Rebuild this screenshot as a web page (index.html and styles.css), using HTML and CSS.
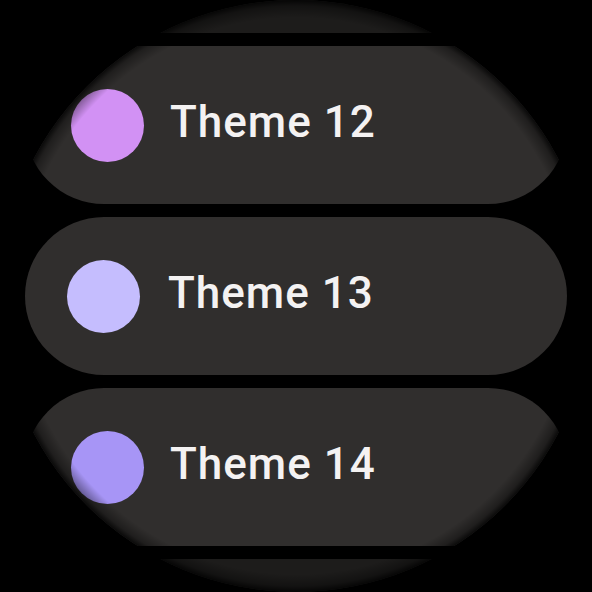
FILE: index.html
```html
<!DOCTYPE html>
<html>
<head>
    <title>Themes</title>
    <link rel="stylesheet" href="styles.css">
</head>
<body>
    <div class="watch">
        <!-- テーマ一覧 -->
        <div class="theme-list">
            <div class="chip chip-far"></div>
            <div class="chip chip-near">
                <span class="swatch swatch-12"></span>
                <span class="label">Theme 12</span>
            </div>
            <div class="chip">
                <span class="swatch swatch-13"></span>
                <span class="label">Theme 13</span>
            </div>
            <div class="chip chip-near">
                <span class="swatch swatch-14"></span>
                <span class="label">Theme 14</span>
            </div>
            <div class="chip chip-far"></div>
        </div>
        <!-- 画面の縁の影 -->
        <div class="vignette"></div>
    </div>
</body>
</html>
```

FILE: styles.css
```css
body {
    margin: 0;
    padding: 0;
    background-color: #000;
    font-family: Roboto, "Noto Sans", sans-serif;
}
.watch {
    position: relative;
    width: 592px;
    height: 592px;
    border-radius: 50%;
    overflow: hidden;
    background-color: #000;
}
.theme-list {
    display: flex;
    flex-direction: column;
    justify-content: center;
    align-items: center;
    gap: 13px;
    height: 100%;
}
.chip {
    flex-shrink: 0;
    display: flex;
    align-items: center;
    box-sizing: border-box;
    width: 542px;
    height: 158px;
    padding-left: 42px;
    border-radius: 79px;
    background-color: #302e2d;
}
.chip-near {
    padding-left: 46px;
}
.chip-far {
    opacity: 0.6;
}
.swatch {
    flex-shrink: 0;
    width: 73px;
    height: 73px;
    border-radius: 50%;
    margin-right: 28px;
}
.chip-near .swatch {
    margin-right: 26px;
}
.swatch-12 { background-color: #d291f4; }
.swatch-13 { background-color: #c5bdfe; }
.swatch-14 { background-color: #a795f6; }
.label {
    color: #f4f2f2;
    font-size: 44px;
    font-weight: 500;
    letter-spacing: 1px;
    margin-top: -6px;
}
/* 丸い画面の縁だけ少し暗くする */
.vignette {
    position: absolute;
    top: 0;
    left: 0;
    right: 0;
    bottom: 0;
    pointer-events: none;
    background: radial-gradient(circle closest-side at center,
        rgba(0, 0, 0, 0) 94%,
        rgba(0, 0, 0, 0.35) 98%,
        rgba(0, 0, 0, 0.8) 100%);
}
```
